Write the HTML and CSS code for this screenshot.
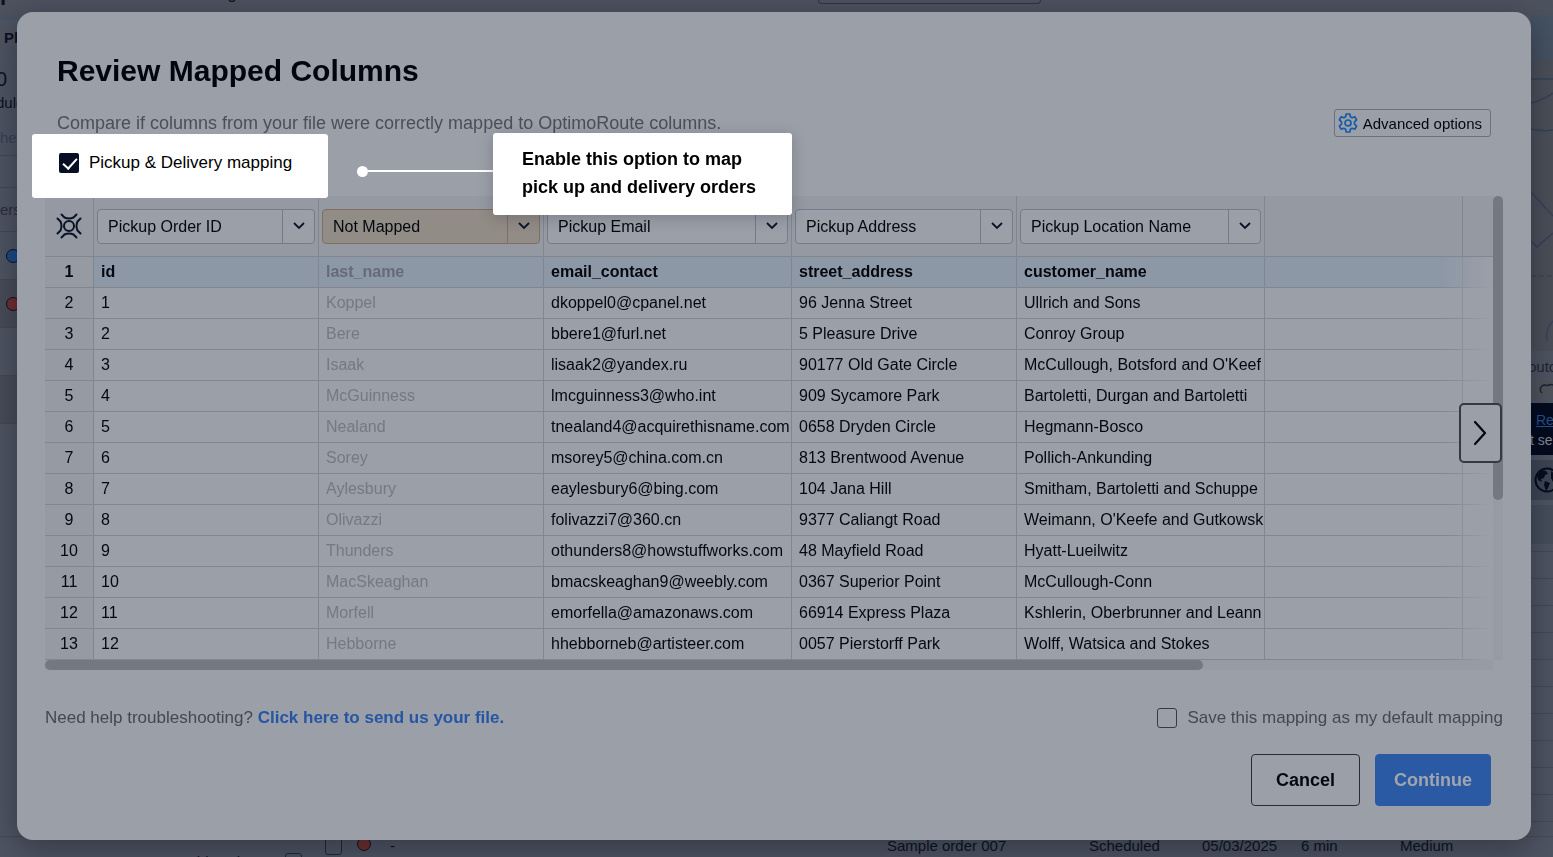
FILE: index.html
```
<!DOCTYPE html>
<html lang="en">
<head>
  <meta charset="UTF-8">
  <meta name="viewport" content="width=device-width, initial-scale=1.0">
  <title>Review Mapped Columns</title>
  <link rel="stylesheet" href="styles.css">
</head>
<body>
  <!-- Planning page behind the dialog -->
  <div class="app">
    <div class="topbar">
      <div class="brand">ptimoroute</div>
      <div class="topbar-item">Planning</div>
      <div class="topbar-search"></div>
    </div>
    <div class="app-body">
      <div class="sidebar">
        <div class="side-title">Plan</div>
        <div class="side-count">0</div>
        <div class="side-label">duled</div>
        <div class="side-muted">hec</div>
        <div class="side-row short"></div>
        <div class="side-row">ers</div>
        <div class="side-row tall"><span class="dot blue"></span></div>
        <div class="side-row tall selected"><span class="dot red"></span></div>
        <div class="side-row tall"></div>
        <div class="side-row tall selected"></div>
        <div class="side-row tall"></div>
      </div>
      <div class="map-column">
        <div class="map-head"></div>
        <svg class="map" width="22" height="292" viewBox="0 0 22 292" fill="none">
          <path d="M0 20h22M0 44q10-2 22-10M0 70q12 3 22 1M0 133l22 24M0 182l6 6 16-14M22 262q-8 8-6 20" stroke="#35415c" stroke-width="1.5"/>
          <path d="M0 217h22" stroke="#3a404c" stroke-dasharray="5 3"/>
        </svg>
        <div class="map-label">outo</div>
        <svg class="map-strip" width="22" height="16" viewBox="0 0 22 16" fill="none" stroke="#1c2432" stroke-width="1.5">
          <path d="M22 4c-4-2-4 2-8 0-5 0-6 6-3 8"/>
        </svg>
        <div class="notice"><a href="#">Refresh</a><div>t selected</div></div>
        <div class="globe-row">
          <svg width="26" height="26" viewBox="0 0 26 26">
            <circle cx="13" cy="13" r="11.5" fill="none" stroke="#060d1c" stroke-width="2"/>
            <path d="M3 8l5-5 4 1 2 3-3 1-1 3-3 1 1 3-4-2zM11 14l5 2-2 5-2 3-2-6zM17 4l5 4 2 6-5 1-2-4z" fill="#060d1c"/>
          </svg>
        </div>
        <div class="map-rows"></div>
        <div class="map-lines"></div>
      </div>
    </div>
    <div class="order-row">
      <div class="drivers"><span>Hide Drivers</span><span class="tick-box"></span></div>
      <div><span class="tick-box"></span></div>
      <div><span class="dot red"></span></div>
      <div>-</div>
      <div>Sample order 007</div>
      <div>Scheduled</div>
      <div>05/03/2025</div>
      <div>6 min</div>
      <div>Medium</div>
    </div>
  </div>

  <!-- Mapping dialog -->
  <div class="overlay">
    <div class="modal" role="dialog" aria-labelledby="modal-title">
      <h1 id="modal-title">Review Mapped Columns</h1>

      <div class="intro">
        <p>Compare if columns from your file were correctly mapped to OptimoRoute columns.</p>
        <button class="btn-advanced" type="button">
          <svg width="20" height="20" viewBox="0 0 20 20" fill="none" stroke="#165ba6" stroke-width="1.7" stroke-linejoin="round">
            <path d="M8.200 1h3.600l.6 2.700 1.700 1 2.700-.9 1.800 3.100-2.100 1.900v2.400l2.100 1.900-1.800 3.100-2.700-.9-1.700 1-.6 2.700H8.200l-.6-2.700-1.700-1-2.700.9-1.800-3.100 2.100-1.900V8.800L1.400 6.900l1.800-3.100 2.700.9 1.700-1z"/>
            <circle cx="10" cy="10" r="3"/>
          </svg>
          Advanced options
        </button>
      </div>

      <div class="toolbar">
        <label class="spotlight">
          <input type="checkbox" class="check dark" checked>
          Pickup &amp; Delivery mapping
        </label>
        <div class="callout-group">
          <span class="callout-dot"></span>
          <span class="callout-line"></span>
          <div class="callout">Enable this option to map<br>pick up and delivery orders</div>
        </div>
      </div>

      <div class="grid">
        <div class="grid-view">
          <table>
            <colgroup>
              <col class="col-num"><col class="col-m"><col class="col-m"><col class="col-l"><col class="col-m"><col class="col-l"><col class="col-s"><col>
            </colgroup>
            <thead>
              <tr>
                <th>
                  <svg class="target" width="26" height="26" viewBox="0 0 26 26" fill="none" stroke="#0a1428" stroke-width="2" stroke-linecap="round" stroke-linejoin="round">
                    <circle cx="13" cy="13" r="5"/>
                    <path d="M5.500 1.500L8.500 4.500Q13 6.500 17.500 4.500L20.500 1.500"/>
                    <path d="M5.500 24.500L8.500 21.500Q13 19.500 17.500 21.500L20.500 24.500"/>
                    <path d="M1.500 5.500L4.500 8.500Q6.500 13 4.500 17.500L1.500 20.500"/>
                    <path d="M24.500 5.500L21.500 8.500Q19.500 13 21.500 17.500L24.500 20.500"/>
                  </svg>
                </th>
                <th><div class="picker"><select aria-label="Column 1"><option>Pickup Order ID</option></select><span class="arrow"><svg width="12" height="8" viewBox="0 0 12 8"><path d="M1 1l5 5 5-5"/></svg></span></div></th>
                <th><div class="picker unmapped"><select aria-label="Column 2"><option>Not Mapped</option></select><span class="arrow"><svg width="12" height="8" viewBox="0 0 12 8"><path d="M1 1l5 5 5-5"/></svg></span></div></th>
                <th><div class="picker"><select aria-label="Column 3"><option>Pickup Email</option></select><span class="arrow"><svg width="12" height="8" viewBox="0 0 12 8"><path d="M1 1l5 5 5-5"/></svg></span></div></th>
                <th><div class="picker"><select aria-label="Column 4"><option>Pickup Address</option></select><span class="arrow"><svg width="12" height="8" viewBox="0 0 12 8"><path d="M1 1l5 5 5-5"/></svg></span></div></th>
                <th><div class="picker"><select aria-label="Column 5"><option>Pickup Location Name</option></select><span class="arrow"><svg width="12" height="8" viewBox="0 0 12 8"><path d="M1 1l5 5 5-5"/></svg></span></div></th>
                <th></th>
                <th></th>
              </tr>
            </thead>
            <tbody>
              <tr class="names"><td>1</td><td>id</td><td>last_name</td><td>email_contact</td><td>street_address</td><td>customer_name</td><td></td><td></td></tr>
              <tr><td>2</td><td>1</td><td>Koppel</td><td>dkoppel0@cpanel.net</td><td>96 Jenna Street</td><td>Ullrich and Sons</td><td></td><td></td></tr>
              <tr><td>3</td><td>2</td><td>Bere</td><td>bbere1@furl.net</td><td>5 Pleasure Drive</td><td>Conroy Group</td><td></td><td></td></tr>
              <tr><td>4</td><td>3</td><td>Isaak</td><td>lisaak2@yandex.ru</td><td>90177 Old Gate Circle</td><td>McCullough, Botsford and O'Keef</td><td></td><td></td></tr>
              <tr><td>5</td><td>4</td><td>McGuinness</td><td>lmcguinness3@who.int</td><td>909 Sycamore Park</td><td>Bartoletti, Durgan and Bartoletti</td><td></td><td></td></tr>
              <tr><td>6</td><td>5</td><td>Nealand</td><td>tnealand4@acquirethisname.com</td><td>0658 Dryden Circle</td><td>Hegmann-Bosco</td><td></td><td></td></tr>
              <tr><td>7</td><td>6</td><td>Sorey</td><td>msorey5@china.com.cn</td><td>813 Brentwood Avenue</td><td>Pollich-Ankunding</td><td></td><td></td></tr>
              <tr><td>8</td><td>7</td><td>Aylesbury</td><td>eaylesbury6@bing.com</td><td>104 Jana Hill</td><td>Smitham, Bartoletti and Schuppe</td><td></td><td></td></tr>
              <tr><td>9</td><td>8</td><td>Olivazzi</td><td>folivazzi7@360.cn</td><td>9377 Caliangt Road</td><td>Weimann, O'Keefe and Gutkowsk</td><td></td><td></td></tr>
              <tr><td>10</td><td>9</td><td>Thunders</td><td>othunders8@howstuffworks.com</td><td>48 Mayfield Road</td><td>Hyatt-Lueilwitz</td><td></td><td></td></tr>
              <tr><td>11</td><td>10</td><td>MacSkeaghan</td><td>bmacskeaghan9@weebly.com</td><td>0367 Superior Point</td><td>McCullough-Conn</td><td></td><td></td></tr>
              <tr><td>12</td><td>11</td><td>Morfell</td><td>emorfella@amazonaws.com</td><td>66914 Express Plaza</td><td>Kshlerin, Oberbrunner and Leann</td><td></td><td></td></tr>
              <tr><td>13</td><td>12</td><td>Hebborne</td><td>hhebborneb@artisteer.com</td><td>0057 Pierstorff Park</td><td>Wolff, Watsica and Stokes</td><td></td><td></td></tr>
            </tbody>
          </table>
          <div class="fade"></div>
        </div>
        <div class="v-track"><div class="v-thumb"></div></div>
        <div class="h-track"><div class="h-thumb"></div></div>
        <button class="next" type="button" aria-label="Next columns">
          <svg width="14" height="26" viewBox="0 0 14 26" fill="none" stroke="#05080f" stroke-width="2.2" stroke-linecap="round" stroke-linejoin="round"><path d="M2 2l10 11L2 24"/></svg>
        </button>
      </div>

      <div class="help">
        <p>Need help troubleshooting? <a href="#">Click here to send us your file.</a></p>
        <label><input type="checkbox" class="check"> Save this mapping as my default mapping</label>
      </div>

      <div class="buttons">
        <button class="btn btn-cancel" type="button">Cancel</button>
        <button class="btn btn-continue" type="button">Continue</button>
      </div>
    </div>
  </div>
</body>
</html>
```
FILE: styles.css
```
* {
  margin: 0;
  padding: 0;
  box-sizing: border-box;
}

body {
  font-family: "Liberation Sans", Arial, sans-serif;
  font-size: 16px;
  color: #05080f;
  background: #4e5461;
}

button,
select {
  font: inherit;
  color: inherit;
}

/* Page behind the dialog */
.app {
  display: flex;
  flex-direction: column;
  height: 100vh;
  overflow: hidden;
  font-size: 15px;
  color: #0c1320;
}

.topbar {
  display: flex;
  align-items: flex-start;
  height: 15px;
  overflow: hidden;
  line-height: 20px;
  background: #4d525f;
}

.brand {
  width: 174px;
  margin-top: -17px;
  font-size: 22px;
  font-weight: bold;
}

.topbar-item {
  width: 644px;
  margin-top: -16px;
  font-size: 16px;
}

.topbar-search {
  width: 223px;
  height: 4px;
  border: 1px solid #2d3442;
  border-top: none;
  border-radius: 0 0 4px 4px;
}

.app-body {
  display: flex;
  flex: 1;
  min-height: 0;
  justify-content: space-between;
}

.sidebar {
  width: 320px;
  line-height: 20px;
  border-top: 5px solid #475362;
}

.side-title {
  padding: 8px 4px;
  font-weight: bold;
}

.side-count {
  margin-left: -4px;
  padding: 13px 0 1px;
  font-size: 20px;
}

.side-label {
  margin-left: -4px;
  padding: 3px 0;
}

.side-muted {
  padding: 12px 0 7px;
  color: #354253;
}

.side-row {
  display: flex;
  align-items: center;
  height: 44px;
  border-top: 1px solid #424854;
  color: #2a303c;
}

.side-row.short {
  height: 32px;
}

.side-row.tall {
  height: 48px;
  padding-left: 6px;
}

.side-row.selected {
  background: #474c58;
}

.dot {
  display: inline-block;
  width: 14px;
  height: 14px;
  border: 1px solid #0c1320;
  border-radius: 50%;
}

.dot.blue {
  background: #1b4a80;
}

.dot.red {
  background: #6e2f2f;
}

.map-column {
  display: flex;
  flex-direction: column;
  width: 22px;
  overflow: hidden;
  white-space: nowrap;
  background: #4e5461;
}

.map-head {
  height: 44px;
  background: #455261;
}

.map {
  display: block;
  background: #4a4f58;
}

.map-label {
  height: 30px;
  margin-left: -3px;
  line-height: 32px;
  color: #20262f;
}

.map-strip {
  display: block;
  background: #4f555b;
}

.notice {
  height: 52px;
  margin-top: 6px;
  padding: 7px 0 0 5px;
  font-size: 14px;
  line-height: 20px;
  color: #848994;
  background: #030b1d;
}

.notice a {
  color: #274f91;
}

.notice div {
  margin-left: -6px;
}

.globe-row {
  height: 40px;
  margin: 5px 0;
  padding: 7px 3px;
  background: #3d4654;
}

.map-rows {
  height: 39px;
  margin-bottom: 7px;
  background: #454e5b;
}

.map-lines {
  flex: 1;
  background: repeating-linear-gradient(#434956 0 1px, transparent 1px 27px);
}

.order-row {
  display: grid;
  grid-template-columns: 325px 32px 33px 497px 202px 113px 99px 99px 1fr;
  height: 21px;
  line-height: 18px;
  overflow: hidden;
  border-top: 1px solid #434956;
}

.tick-box {
  display: inline-block;
  width: 17px;
  height: 18px;
  border: 1px solid #20283a;
  border-radius: 3px;
}

.drivers {
  display: flex;
  gap: 16px;
  padding: 16px 0 0 186px;
}

/* Dialog */
.overlay {
  position: fixed;
  inset: 0;
  padding: 12px 22px 17px 17px;
}

.modal {
  padding: 39px 28px 34px;
  border-radius: 16px;
  background: #9b9fa8;
  box-shadow: 0 8px 32px rgba(0, 5, 20, 0.35);
}

h1 {
  padding-left: 12px;
  font-size: 30px;
  line-height: 40px;
  color: #02060f;
}

.intro {
  display: flex;
  justify-content: space-between;
  align-items: center;
  height: 28px;
  margin: 18px 12px 0;
  font-size: 18px;
  color: #4a4f59;
}

.btn-advanced {
  display: flex;
  align-items: center;
  gap: 5px;
  height: 28px;
  padding: 0 8px 0 3px;
  border: 1px solid #6b7180;
  border-radius: 3px;
  background: none;
  font-size: 15px;
  color: #05080f;
}

.toolbar {
  position: relative;
  height: 59px;
}

.spotlight {
  position: absolute;
  top: -3px;
  left: -13px;
  z-index: 1;
  display: flex;
  gap: 10px;
  height: 64px;
  padding: 19px 36px 0 27px;
  border-radius: 3px;
  background: #fff;
  font-size: 17px;
  line-height: 20px;
  color: #000;
}

.check {
  appearance: none;
  width: 20px;
  height: 20px;
  border: 1px solid #303b4c;
  border-radius: 3px;
}

.check.dark {
  border: none;
  border-radius: 2px;
  background: #060f24;
}

.check.dark::before {
  content: "";
  display: block;
  width: 6px;
  height: 12px;
  margin: 2px 0 0 7px;
  border: solid #fff;
  border-width: 0 2px 2px 0;
  transform: rotate(42deg);
}

.callout-group {
  position: absolute;
  top: -4px;
  left: 312px;
  z-index: 1;
  display: flex;
  align-items: flex-start;
}

.callout-dot {
  width: 11px;
  height: 11px;
  margin-top: 33px;
  border-radius: 50%;
  background: #fff;
}

.callout-line {
  width: 125px;
  height: 2px;
  margin-top: 37px;
  background: #fff;
}

.callout {
  width: 299px;
  height: 82px;
  padding: 12px 0 0 29px;
  border-radius: 3px;
  background: #fff;
  box-shadow: 0 3px 16px rgba(0, 5, 20, 0.2);
  font-size: 18px;
  font-weight: bold;
  line-height: 28px;
  color: #000;
}

/* Column grid */
.grid {
  position: relative;
  display: grid;
  grid-template-columns: 1fr 10px;
}

.grid-view {
  position: relative;
  overflow: hidden;
}

table {
  width: 100%;
  table-layout: fixed;
  border-spacing: 0;
}

.col-num {
  width: 49px;
}

.col-m {
  width: 225px;
}

.col-l {
  width: 248px;
}

.col-s {
  width: 198px;
}

th,
td {
  border-right: 1px solid #82868f;
  border-bottom: 1px solid #82868f;
}

th:last-child,
td:last-child {
  border-right: none;
}

th {
  height: 61px;
  padding: 0 3px;
  background: #9599a2;
  font-weight: normal;
  text-align: left;
}

td {
  height: 31px;
  padding: 0 0 0 7px;
  overflow: hidden;
  white-space: nowrap;
}

td:first-child {
  padding: 0;
  text-align: center;
  background: #959aa3;
}

td:nth-child(3) {
  color: #747982;
}

.names td {
  font-weight: bold;
  background: #8d98a7;
}

.names td:first-child {
  background: #959aa3;
}

.names td:nth-child(3) {
  color: #656c77;
}

.target {
  display: block;
  margin: 0 auto;
}

.picker {
  display: flex;
  height: 35px;
  border: 1px solid #747c8c;
  border-radius: 4px;
  background: #9b9fa8;
}

.picker.unmapped {
  border-color: #806f61;
  background: #928c87;
}

.picker select {
  flex: 1;
  min-width: 0;
  padding-left: 10px;
  appearance: none;
  border: none;
  background: none;
}

.arrow {
  display: flex;
  align-items: center;
  justify-content: center;
  width: 32px;
  border-left: 1px solid #747c8c;
}

.unmapped .arrow {
  border-color: #806f61;
}

.arrow path {
  fill: none;
  stroke: #0a1428;
  stroke-width: 1.8;
}

.fade {
  position: absolute;
  top: 61px;
  right: 0;
  bottom: 0;
  width: 50px;
  background: linear-gradient(to right, rgba(155, 159, 168, 0), #9b9fa8);
}

.v-track,
.h-track {
  background: #979ba4;
}

.v-thumb {
  height: 304px;
  border-radius: 5px;
  background: #747881;
}

.h-thumb {
  width: 80%;
  height: 10px;
  border-radius: 5px;
  background: #747881;
}

.next {
  position: absolute;
  top: 207px;
  right: 1px;
  display: flex;
  align-items: center;
  justify-content: center;
  width: 43px;
  height: 60px;
  padding-right: 2px;
  border: 2px solid #343944;
  border-radius: 5px;
  background: #9b9fa8;
}

.help {
  display: flex;
  justify-content: space-between;
  align-items: center;
  margin-top: 36px;
  font-size: 17px;
  line-height: 24px;
  color: #434852;
}

.help a {
  font-weight: bold;
  text-decoration: none;
  color: #2656a3;
}

.help label {
  display: flex;
  align-items: center;
  gap: 10px;
}

.buttons {
  display: flex;
  justify-content: flex-end;
  gap: 15px;
  margin: 24px 12px 0;
}

.btn {
  height: 52px;
  padding: 0 20px;
  border: 1px solid #2a5aa3;
  border-radius: 4px;
  font-size: 18px;
  font-weight: bold;
}

.btn-cancel {
  padding: 0 24px;
  border-color: #262c37;
  background: none;
}

.btn-continue {
  padding: 0 18px;
  color: #a0a5ae;
  background: #2a5aa3;
}
```
